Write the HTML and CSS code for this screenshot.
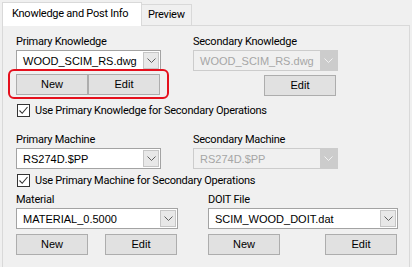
FILE: index.html
```html
<!DOCTYPE html>
<html>
<head>
<meta charset="utf-8">
<link rel="stylesheet" href="styles.css">
</head>
<body>
<div class="tabs">
  <div class="tab active">Knowledge and Post Info</div>
  <div class="tab">Preview</div>
</div>
<div class="panel">
  <div class="row">
    <div class="field w145">
      <div class="label">Primary Knowledge</div>
      <div class="combo"><span class="val">WOOD_SCIM_RS.dwg</span><span class="dd"><svg width="9" height="5" viewBox="0 0 9 5"><path d="M0.5 0.5 L4.5 4.5 L8.5 0.5" fill="none" stroke="#606060" stroke-width="1"/></svg></span></div>
      <div class="btns">
        <div class="btn">New</div><div class="btn">Edit</div>
        <div class="highlight"></div>
      </div>
    </div>
    <div class="field w145 gap32">
      <div class="label">Secondary Knowledge</div>
      <div class="combo disabled"><span class="val">WOOD_SCIM_RS.dwg</span><span class="dd"><svg width="9" height="5" viewBox="0 0 9 5"><path d="M0.5 0.5 L4.5 4.5 L8.5 0.5" fill="none" stroke="#f2f2f2" stroke-width="1"/></svg></span></div>
      <div class="btns">
        <div class="btn push71">Edit</div>
      </div>
    </div>
  </div>
  <div class="check c1"><span class="box"><svg width="11" height="11" viewBox="0 0 11 11"><path d="M1.5 5.5 L4.2 8.3 L9.5 2" fill="none" stroke="#333" stroke-width="1.1"/></svg></span><span>Use Primary Knowledge for Secondary Operations</span></div>

  <div class="row r2">
    <div class="field w145">
      <div class="label">Primary Machine</div>
      <div class="combo"><span class="val">RS274D.$PP</span><span class="dd"><svg width="9" height="5" viewBox="0 0 9 5"><path d="M0.5 0.5 L4.5 4.5 L8.5 0.5" fill="none" stroke="#606060" stroke-width="1"/></svg></span></div>
    </div>
    <div class="field w145 gap32">
      <div class="label">Secondary Machine</div>
      <div class="combo disabled"><span class="val">RS274D.$PP</span><span class="dd"><svg width="9" height="5" viewBox="0 0 9 5"><path d="M0.5 0.5 L4.5 4.5 L8.5 0.5" fill="none" stroke="#f2f2f2" stroke-width="1"/></svg></span></div>
    </div>
  </div>
  <div class="check c2"><span class="box"><svg width="11" height="11" viewBox="0 0 11 11"><path d="M1.5 5.5 L4.2 8.3 L9.5 2" fill="none" stroke="#333" stroke-width="1.1"/></svg></span><span>Use Primary Machine for Secondary Operations</span></div>

  <div class="row r3">
    <div class="field w162">
      <div class="label">Material</div>
      <div class="combo"><span class="val">MATERIAL_0.5000</span><span class="dd"><svg width="9" height="5" viewBox="0 0 9 5"><path d="M0.5 0.5 L4.5 4.5 L8.5 0.5" fill="none" stroke="#606060" stroke-width="1"/></svg></span></div>
      <div class="btns spread">
        <div class="btn">New</div><div class="btn">Edit</div>
      </div>
    </div>
    <div class="field w190 gap30">
      <div class="label">DOIT File</div>
      <div class="combo"><span class="val">SCIM_WOOD_DOIT.dat</span><span class="dd"><svg width="9" height="5" viewBox="0 0 9 5"><path d="M0.5 0.5 L4.5 4.5 L8.5 0.5" fill="none" stroke="#606060" stroke-width="1"/></svg></span></div>
      <div class="btns spread">
        <div class="btn">New</div><div class="btn">Edit</div>
      </div>
    </div>
  </div>
</div>
</body>
</html>
```

FILE: styles.css
```css
* { box-sizing: border-box; }
html, body { margin: 0; padding: 0; }
body {
  width: 412px;
  height: 267px;
  overflow: hidden;
  background: #f0f0f0;
  font-family: Roboto, "Noto Sans", sans-serif;
  font-size: 11px;
  letter-spacing: -0.25px;
  color: #000;
}
.tabs {
  display: flex;
  align-items: flex-end;
  padding: 2px 0 0 2px;
  height: 26px;
  position: relative;
  z-index: 1;
}
.tab {
  height: 21px;
  padding: 0 6px 0 6px;
  border: 1px solid #d9d9d9;
  border-bottom: none;
  border-left: none;
  background: #f0f0f0;
  line-height: 20px;
  margin-bottom: 1px;
}
.tab.active {
  width: 140px;
  height: 24px;
  margin-bottom: 0;
  border-left: 1px solid #d9d9d9;
  background: #fff;
  padding: 0 0 0 9px;
  line-height: 22px;
}
.panel {
  margin: -1px 2px 0 2px;
  border: 1px solid #d9d9d9;
  height: 245px;
  padding: 8px 0 0 13px;
}
.row { display: flex; }
.field { display: flex; flex-direction: column; }
.w145 { width: 145px; }
.w162 { width: 162px; }
.w190 { width: 190px; }
.gap32 { margin-left: 32px; }
.gap30 { margin-left: 30px; }
.label { height: 16px; line-height: 16px; }
.combo {
  height: 21px;
  border: 1px solid #a3a3a3;
  background: #fff;
  display: flex;
  align-items: center;
  justify-content: space-between;
  padding: 0 1px 0 6px;
  font-family: "Liberation Sans", Arial, sans-serif;
  font-size: 11px;
  letter-spacing: 0;
}
.combo .dd {
  width: 16px;
  height: 17px;
  border: 1px solid #c6c6c6;
  background: #e8e8e8;
  display: flex;
  align-items: center;
  justify-content: center;
}
.combo.disabled {
  border-color: #cccccc;
  background: #f0f0f0;
  color: #a6a6a6;
  padding-right: 0;
}
.combo.disabled .dd {
  border: none;
  background: #cccccc;
  height: 19px;
  width: 17px;
}
.btns {
  display: flex;
  margin-top: 3px;
  position: relative;
}
.btns.spread { justify-content: space-between; margin-top: 5px; padding-right: 1px; }
.btn {
  width: 72px;
  height: 21px;
  border: 1px solid #adadad;
  background: #e1e1e1;
  font-family: "Liberation Sans", Arial, sans-serif;
  font-size: 11px;
  letter-spacing: 0;
  line-height: 19px;
  text-align: center;
}
.push71 { margin-left: 71px; margin-top: 1px; }
.highlight {
  position: absolute;
  left: -8px;
  top: -5px;
  width: 161px;
  height: 30px;
  border: 2.5px solid #e5101d;
  border-radius: 6px;
}
.check {
  display: flex;
  align-items: center;
  height: 16px;
  margin-left: 1px;
}
.check .box {
  width: 13px;
  height: 13px;
  border: 1px solid #333;
  background: #fff;
  margin-right: 5px;
  display: flex;
  align-items: center;
  justify-content: center;
}
.c1 { margin-top: 6px; }
.r2 { margin-top: 14px; }
.c2 { margin-top: 3px; }
.r3 { margin-top: 4px; }
```
